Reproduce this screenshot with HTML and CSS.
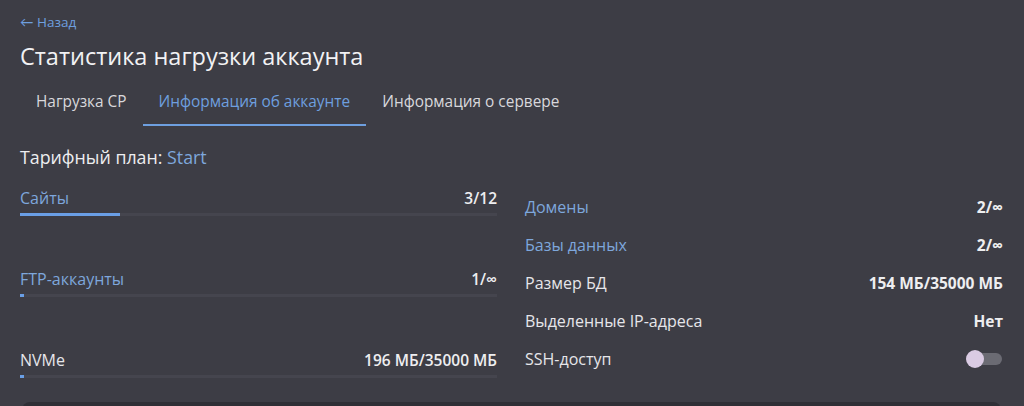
FILE: index.html
```html
<!DOCTYPE html>
<html lang="ru">
<head>
    <meta charset="UTF-8">
    <title>Статистика нагрузки аккаунта</title>
    <link rel="stylesheet" href="styles.css">
</head>
<body>
    <div class="page">
        <a class="back-link" href="#">← Назад</a>
        <h1>Статистика нагрузки аккаунта</h1>

        <div class="tabs">
            <div class="tab">Нагрузка CP</div>
            <div class="tab active">Информация об аккаунте</div>
            <div class="tab">Информация о сервере</div>
        </div>

        <div class="plan">Тарифный план: <span class="plan-name">Start</span></div>

        <div class="stats">
            <div class="stats-left">
                <div class="usage">
                    <div class="usage-head">
                        <span class="label link">Сайты</span>
                        <span class="value">3/12</span>
                    </div>
                    <div class="bar"><div class="bar-fill" style="width: 21%"></div></div>
                </div>
                <div class="usage">
                    <div class="usage-head">
                        <span class="label link">FTP-аккаунты</span>
                        <span class="value">1/∞</span>
                    </div>
                    <div class="bar"><div class="bar-fill min"></div></div>
                </div>
                <div class="usage">
                    <div class="usage-head">
                        <span class="label">NVMe</span>
                        <span class="value">196 МБ/35000 МБ</span>
                    </div>
                    <div class="bar"><div class="bar-fill min"></div></div>
                </div>
            </div>

            <div class="stats-right">
                <div class="info-row">
                    <span class="label link">Домены</span>
                    <span class="value strong">2/∞</span>
                </div>
                <div class="info-row">
                    <span class="label link">Базы данных</span>
                    <span class="value strong">2/∞</span>
                </div>
                <div class="info-row">
                    <span class="label">Размер БД</span>
                    <span class="value strong">154 МБ/35000 МБ</span>
                </div>
                <div class="info-row">
                    <span class="label">Выделенные IP-адреса</span>
                    <span class="value strong">Нет</span>
                </div>
                <div class="info-row">
                    <span class="label">SSH-доступ</span>
                    <span class="switch"><span class="knob"></span></span>
                </div>
            </div>
        </div>

        <div class="panel"></div>
    </div>
</body>
</html>
```

FILE: styles.css
```css
body {
    margin: 0;
    background: #3d3d45;
    font-family: "Open Sans", Lato, sans-serif;
    color: #e4e4e8;
    overflow: hidden;
}

.page {
    padding: 10px 21px 0 20px;
}

.back-link {
    display: inline-block;
    color: #6e9fdf;
    font-size: 13.5px;
    text-decoration: none;
    line-height: 20px;
}

h1 {
    margin: 10px 0 0;
    font-size: 23.5px;
    font-weight: 400;
    color: #f2f2f4;
    line-height: 28px;
}

.tabs {
    display: flex;
    margin-top: 12px;
}

.tab {
    padding: 9px 16px 11px;
    font-size: 15.4px;
    line-height: 22px;
    color: #d8d8dc;
    border-bottom: 2px solid transparent;
}

.tab.active {
    color: #6e9fdf;
    border-bottom-color: #6e9fdf;
}

.plan {
    margin-top: 20px;
    font-size: 17.8px;
    line-height: 22px;
    color: #eeeef0;
}

.plan-name {
    color: #7ea7dc;
}

.stats {
    display: flex;
    gap: 28px;
    margin-top: 20px;
}

.stats-left {
    flex: 0 0 477px;
}

.stats-right {
    flex: 1;
}

.usage {
    margin-bottom: 53px;
}

.usage:last-child {
    margin-bottom: 0;
}

.usage-head,
.info-row {
    display: flex;
    justify-content: space-between;
    align-items: center;
    font-size: 16px;
    font-weight: 500;
    line-height: 20px;
}

.label {
    color: #e6e6ea;
}

.label.link {
    color: #7ea7dc;
}

.value {
    color: #eeeef0;
    font-weight: 600;
    font-size: 15.5px;
}

.value.strong {
    font-weight: 700;
}

.bar {
    margin-top: 5px;
    height: 3px;
    background: #45454e;
}

.bar-fill {
    height: 100%;
    background: #6a9fe6;
}

.bar-fill.min {
    width: 4px;
}

.info-row {
    height: 38px;
}

.switch {
    position: relative;
    width: 28px;
    height: 12px;
    margin-right: 1px;
    border-radius: 6px;
    background: #6b6b73;
}

.knob {
    position: absolute;
    left: -8px;
    top: -3px;
    width: 18px;
    height: 18px;
    border-radius: 50%;
    background: #dacbe3;
}

.panel {
    margin: 24px 2px 0;
    height: 40px;
    background: #2f2f36;
    border-radius: 8px 8px 0 0;
}
```
